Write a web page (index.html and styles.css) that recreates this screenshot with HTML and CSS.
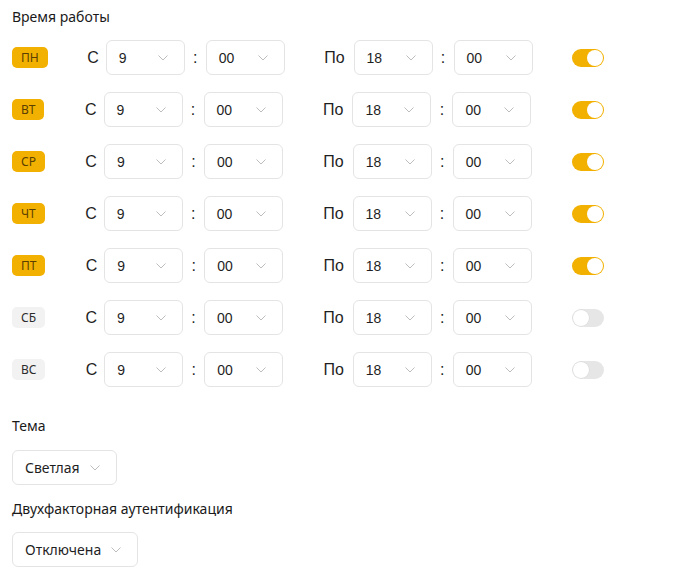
FILE: index.html
```html
<!DOCTYPE html>
<html lang="ru">
<head>
<meta charset="utf-8">
<title>Настройки</title>
<link rel="stylesheet" href="styles.css">
</head>
<body>
<div class="page">
  <div class="label title">Время работы</div>
  <div class="rows">
    <div class="row">
      <span class="day on">ПН</span>
      <div class="group"><span class="word">С</span><div class="sel"><span>9</span><svg class="chev" viewBox="0 0 10 6"><path d="M0.5 0.5 L5 5 L9.5 0.5"/></svg></div><span class="colon">:</span><div class="sel"><span>00</span><svg class="chev" viewBox="0 0 10 6"><path d="M0.5 0.5 L5 5 L9.5 0.5"/></svg></div></div>
      <div class="group"><span class="word po">По</span><div class="sel"><span>18</span><svg class="chev" viewBox="0 0 10 6"><path d="M0.5 0.5 L5 5 L9.5 0.5"/></svg></div><span class="colon">:</span><div class="sel"><span>00</span><svg class="chev" viewBox="0 0 10 6"><path d="M0.5 0.5 L5 5 L9.5 0.5"/></svg></div></div>
      <span class="toggle on"><span class="knob"></span></span>
    </div>
    <div class="row">
      <span class="day on">ВТ</span>
      <div class="group"><span class="word">С</span><div class="sel"><span>9</span><svg class="chev" viewBox="0 0 10 6"><path d="M0.5 0.5 L5 5 L9.5 0.5"/></svg></div><span class="colon">:</span><div class="sel"><span>00</span><svg class="chev" viewBox="0 0 10 6"><path d="M0.5 0.5 L5 5 L9.5 0.5"/></svg></div></div>
      <div class="group"><span class="word po">По</span><div class="sel"><span>18</span><svg class="chev" viewBox="0 0 10 6"><path d="M0.5 0.5 L5 5 L9.5 0.5"/></svg></div><span class="colon">:</span><div class="sel"><span>00</span><svg class="chev" viewBox="0 0 10 6"><path d="M0.5 0.5 L5 5 L9.5 0.5"/></svg></div></div>
      <span class="toggle on"><span class="knob"></span></span>
    </div>
    <div class="row">
      <span class="day on">СР</span>
      <div class="group"><span class="word">С</span><div class="sel"><span>9</span><svg class="chev" viewBox="0 0 10 6"><path d="M0.5 0.5 L5 5 L9.5 0.5"/></svg></div><span class="colon">:</span><div class="sel"><span>00</span><svg class="chev" viewBox="0 0 10 6"><path d="M0.5 0.5 L5 5 L9.5 0.5"/></svg></div></div>
      <div class="group"><span class="word po">По</span><div class="sel"><span>18</span><svg class="chev" viewBox="0 0 10 6"><path d="M0.5 0.5 L5 5 L9.5 0.5"/></svg></div><span class="colon">:</span><div class="sel"><span>00</span><svg class="chev" viewBox="0 0 10 6"><path d="M0.5 0.5 L5 5 L9.5 0.5"/></svg></div></div>
      <span class="toggle on"><span class="knob"></span></span>
    </div>
    <div class="row">
      <span class="day on">ЧТ</span>
      <div class="group"><span class="word">С</span><div class="sel"><span>9</span><svg class="chev" viewBox="0 0 10 6"><path d="M0.5 0.5 L5 5 L9.5 0.5"/></svg></div><span class="colon">:</span><div class="sel"><span>00</span><svg class="chev" viewBox="0 0 10 6"><path d="M0.5 0.5 L5 5 L9.5 0.5"/></svg></div></div>
      <div class="group"><span class="word po">По</span><div class="sel"><span>18</span><svg class="chev" viewBox="0 0 10 6"><path d="M0.5 0.5 L5 5 L9.5 0.5"/></svg></div><span class="colon">:</span><div class="sel"><span>00</span><svg class="chev" viewBox="0 0 10 6"><path d="M0.5 0.5 L5 5 L9.5 0.5"/></svg></div></div>
      <span class="toggle on"><span class="knob"></span></span>
    </div>
    <div class="row">
      <span class="day on">ПТ</span>
      <div class="group"><span class="word">С</span><div class="sel"><span>9</span><svg class="chev" viewBox="0 0 10 6"><path d="M0.5 0.5 L5 5 L9.5 0.5"/></svg></div><span class="colon">:</span><div class="sel"><span>00</span><svg class="chev" viewBox="0 0 10 6"><path d="M0.5 0.5 L5 5 L9.5 0.5"/></svg></div></div>
      <div class="group"><span class="word po">По</span><div class="sel"><span>18</span><svg class="chev" viewBox="0 0 10 6"><path d="M0.5 0.5 L5 5 L9.5 0.5"/></svg></div><span class="colon">:</span><div class="sel"><span>00</span><svg class="chev" viewBox="0 0 10 6"><path d="M0.5 0.5 L5 5 L9.5 0.5"/></svg></div></div>
      <span class="toggle on"><span class="knob"></span></span>
    </div>
    <div class="row">
      <span class="day off">СБ</span>
      <div class="group"><span class="word">С</span><div class="sel"><span>9</span><svg class="chev" viewBox="0 0 10 6"><path d="M0.5 0.5 L5 5 L9.5 0.5"/></svg></div><span class="colon">:</span><div class="sel"><span>00</span><svg class="chev" viewBox="0 0 10 6"><path d="M0.5 0.5 L5 5 L9.5 0.5"/></svg></div></div>
      <div class="group"><span class="word po">По</span><div class="sel"><span>18</span><svg class="chev" viewBox="0 0 10 6"><path d="M0.5 0.5 L5 5 L9.5 0.5"/></svg></div><span class="colon">:</span><div class="sel"><span>00</span><svg class="chev" viewBox="0 0 10 6"><path d="M0.5 0.5 L5 5 L9.5 0.5"/></svg></div></div>
      <span class="toggle"><span class="knob"></span></span>
    </div>
    <div class="row">
      <span class="day off">ВС</span>
      <div class="group"><span class="word">С</span><div class="sel"><span>9</span><svg class="chev" viewBox="0 0 10 6"><path d="M0.5 0.5 L5 5 L9.5 0.5"/></svg></div><span class="colon">:</span><div class="sel"><span>00</span><svg class="chev" viewBox="0 0 10 6"><path d="M0.5 0.5 L5 5 L9.5 0.5"/></svg></div></div>
      <div class="group"><span class="word po">По</span><div class="sel"><span>18</span><svg class="chev" viewBox="0 0 10 6"><path d="M0.5 0.5 L5 5 L9.5 0.5"/></svg></div><span class="colon">:</span><div class="sel"><span>00</span><svg class="chev" viewBox="0 0 10 6"><path d="M0.5 0.5 L5 5 L9.5 0.5"/></svg></div></div>
      <span class="toggle"><span class="knob"></span></span>
    </div>
  </div>

  <div class="label section">Тема</div>
  <div class="sel wide"><span>Светлая</span><svg class="chev" viewBox="0 0 10 6"><path d="M0.5 0.5 L5 5 L9.5 0.5"/></svg></div>

  <div class="label section2">Двухфакторная аутентификация</div>
  <div class="sel wide"><span>Отключена</span><svg class="chev" viewBox="0 0 10 6"><path d="M0.5 0.5 L5 5 L9.5 0.5"/></svg></div>
</div>
</body>
</html>
```

FILE: styles.css
```css
* { box-sizing: border-box; }

html, body {
  margin: 0;
  padding: 0;
  background: #ffffff;
}

body {
  font-family: "Noto Sans", "Open Sans", sans-serif;
  color: #1f1f1f;
}

.page {
  padding: 7px 12px;
}

.label {
  font-size: 14px;
  line-height: 20px;
  color: #1a1a1a;
}

.rows {
  margin-top: 13px;
  width: 592px;
  display: flex;
  flex-direction: column;
  gap: 17px;
}

.row {
  display: flex;
  align-items: center;
  justify-content: space-between;
  height: 35px;
}

.day {
  display: inline-block;
  height: 21px;
  line-height: 21px;
  padding: 0 9px;
  border-radius: 5px;
  font-size: 12px;
}

.day.on {
  background: #f2b100;
  color: #5a3f00;
}

.day.off {
  background: #f2f2f2;
  color: #2b2b2b;
}

.group {
  display: flex;
  align-items: center;
}

.word {
  font-family: "Liberation Sans", Arial, sans-serif;
  font-size: 16px;
  color: #1f1f1f;
  margin-right: 7px;
}

.word.po {
  margin-right: 9px;
}

.colon {
  font-family: "Liberation Sans", Arial, sans-serif;
  font-size: 16px;
  color: #1f1f1f;
  width: 21px;
  text-align: center;
}

.sel {
  display: flex;
  align-items: center;
  justify-content: space-between;
  width: 79px;
  height: 35px;
  padding: 0 16px 0 12px;
  border: 1px solid #e4e4e4;
  border-radius: 6px;
  background: #fff;
  font-family: "Liberation Sans", Arial, sans-serif;
  font-size: 14px;
  color: #1f1f1f;
}

.sel.wide {
  display: inline-flex;
  width: auto;
  gap: 10px;
  font-family: "Noto Sans", "Open Sans", sans-serif;
}

.chev {
  width: 10px;
  height: 6px;
  fill: none;
  stroke: #bdbdbd;
  stroke-width: 1;
}

.toggle {
  display: flex;
  align-items: center;
  width: 32px;
  height: 18px;
  padding: 1px;
  border-radius: 9px;
  background: #e6e6e6;
}

.toggle .knob {
  width: 16px;
  height: 16px;
  border-radius: 50%;
  background: #fff;
  box-shadow: 0 0 0 0.5px #d6d6d6;
}

.toggle.on {
  background: #f2b100;
  justify-content: flex-end;
}

.toggle.on .knob {
  box-shadow: none;
}

.section {
  margin-top: 29px;
  margin-bottom: 14px;
}

.section2 {
  margin-top: 14px;
  margin-bottom: 13px;
}
```
